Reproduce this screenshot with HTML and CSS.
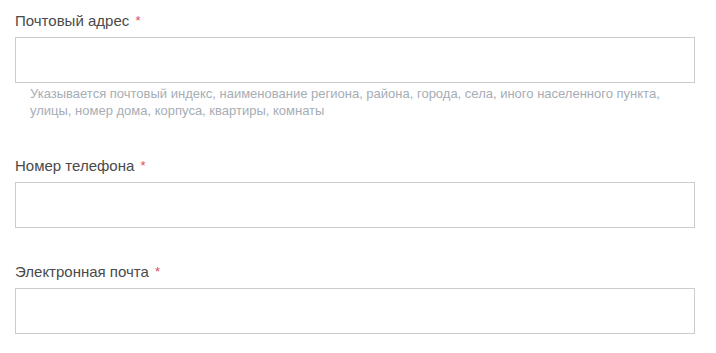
FILE: index.html
```html
<!DOCTYPE html>
<html lang="ru">
<head>
    <meta charset="UTF-8">
    <title>Контактные данные</title>
    <link rel="stylesheet" href="styles.css">
</head>
<body>
    <form class="form">
        <div class="field">
            <label class="field-label" for="address">Почтовый адрес <span class="required">*</span></label>
            <input class="field-input" id="address" type="text">
            <p class="field-hint">Указывается почтовый индекс, наименование региона, района, города, села, иного населенного пункта, улицы, номер дома, корпуса, квартиры, комнаты</p>
        </div>
        <div class="field">
            <label class="field-label" for="phone">Номер телефона <span class="required">*</span></label>
            <input class="field-input" id="phone" type="text">
        </div>
        <div class="field">
            <label class="field-label" for="email">Электронная почта <span class="required">*</span></label>
            <input class="field-input" id="email" type="text">
        </div>
    </form>
</body>
</html>
```

FILE: styles.css
```css
body {
    margin: 0;
    background: #fff;
    font-family: 'Liberation Sans', Arial, sans-serif;
    color: #4a4a4a;
}
.form {
    padding: 10px 21px 0 15px;
}
.field {
    margin-bottom: 33px;
}
.field-label {
    display: block;
    font-size: 15px;
    line-height: 21px;
    margin-bottom: 6px;
}
.required {
    color: #e2495f;
    font-size: 13px;
    vertical-align: top;
    margin-left: 2px;
}
.field-input {
    display: block;
    box-sizing: border-box;
    width: 100%;
    height: 46px;
    margin: 0;
    border: 1px solid #ccc;
    border-radius: 0;
    background: #fff;
    font: inherit;
}
.field-hint {
    margin: 2px 0 0;
    padding: 0 0 3px 15px;
    font-size: 13px;
    line-height: 17px;
    color: #a6adb5;
}
```
